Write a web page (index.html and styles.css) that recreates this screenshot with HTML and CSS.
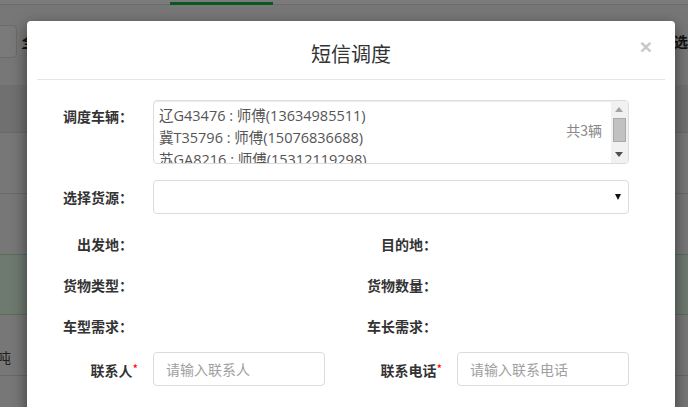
FILE: index.html
```html
<!DOCTYPE html>
<html lang="zh-CN">
<head>
<meta charset="utf-8">
<title>短信调度</title>
<link rel="stylesheet" href="styles.css">
</head>
<body>
<div class="page">
  <div class="topbar"><div class="tab-active"></div></div>
  <div class="toolbar">
    <div class="search-box"></div>
    <span class="tool-text">全部</span>
    <span class="tool-right">筛选</span>
  </div>
  <div class="grid-head"></div>
  <div class="grid-row"></div>
  <div class="grid-row"></div>
  <div class="grid-row selected"></div>
  <div class="grid-row"><span class="cell-unit">吨</span></div>
  <div class="grid-row"></div>
</div>
<div class="backdrop"></div>

<div class="modal">
  <div class="modal-header">
    <h4 class="modal-title">短信调度</h4>
    <span class="close">×</span>
  </div>
  <div class="modal-body">
    <div class="form-row row-vehicles">
      <label class="label label-top">调度车辆：</label>
      <div class="control">
        <div class="vehicle-box">
          <div class="vehicle-list">
            <div>辽G43476 : 师傅(13634985511)</div>
            <div>冀T35796 : 师傅(15076836688)</div>
            <div>苏GA8216 : 师傅(15312119298)</div>
          </div>
          <span class="count">共3辆</span>
          <div class="scrollbar">
            <span class="sb-up"></span>
            <span class="sb-thumb"></span>
            <span class="sb-down"></span>
          </div>
        </div>
      </div>
    </div>

    <div class="form-row row-select">
      <label class="label">选择货源：</label>
      <div class="control">
        <div class="select"><span class="select-arrow"></span></div>
      </div>
    </div>

    <div class="form-row half row-info first">
      <div class="field"><label class="label">出发地：</label><div class="control"></div></div>
      <div class="field"><label class="label">目的地：</label><div class="control"></div></div>
    </div>
    <div class="form-row half row-info">
      <div class="field"><label class="label">货物类型：</label><div class="control"></div></div>
      <div class="field"><label class="label">货物数量：</label><div class="control"></div></div>
    </div>
    <div class="form-row half row-info">
      <div class="field"><label class="label">车型需求：</label><div class="control"></div></div>
      <div class="field"><label class="label">车长需求：</label><div class="control"></div></div>
    </div>
    <div class="form-row half row-contact">
      <div class="field">
        <label class="label">联系人<span class="req">*</span></label>
        <div class="control"><input class="input" type="text" placeholder="请输入联系人"></div>
      </div>
      <div class="field">
        <label class="label">联系电话<span class="req">*</span></label>
        <div class="control"><input class="input" type="text" placeholder="请输入联系电话"></div>
      </div>
    </div>
  </div>
</div>
</body>
</html>
```

FILE: styles.css
```css
* { box-sizing: border-box; }

html, body {
  margin: 0;
  padding: 0;
}

body {
  width: 688px;
  height: 407px;
  overflow: hidden;
  position: relative;
  font-family: "Noto Sans CJK SC", "Open Sans", sans-serif;
  font-size: 14px;
  color: #333;
  background: #f0f0f0;
}

/* ---------- background page ---------- */
.page {
  width: 688px;
  height: 407px;
  background: #f0f0f0;
}

.topbar {
  position: relative;
  height: 5px;
  background: #f6f6f6;
  border-bottom: 1px solid #d8d8d8;
}

.tab-active {
  position: absolute;
  left: 170px;
  bottom: -1px;
  width: 103px;
  height: 3px;
  background: #17b03d;
}

.toolbar {
  height: 80px;
  display: flex;
  align-items: flex-start;
  padding-top: 20px;
  background: #eeeeee;
}

.search-box {
  width: 37px;
  height: 33px;
  margin-left: -20px;
  background: #f4f4f4;
  border: 1px solid #d6d6d6;
  border-radius: 4px;
}

.tool-text {
  margin-left: 5px;
  line-height: 33px;
  font-size: 14px;
  font-weight: bold;
  color: #222;
  text-decoration: underline;
}

.tool-right {
  margin-left: auto;
  margin-right: 0;
  line-height: 33px;
  font-size: 14px;
  font-weight: bold;
  color: #222;
}

.grid-head {
  height: 48px;
  background: #e0e0e0;
  border-bottom: 1px solid #d2d2d2;
}

.grid-row {
  height: 61px;
  background: #eeeeee;
  border-bottom: 1px solid #d2d2d2;
  padding-top: 32px;
}

.grid-row.selected {
  background: #dcf2de;
  border-top: 1px solid #aedcb5;
  border-bottom: 1px solid #aedcb5;
  margin-top: -1px;
}

.cell-unit {
  display: block;
  margin-left: -3px;
  font-size: 14px;
  line-height: 20px;
  color: #444;
}

.backdrop {
  position: absolute;
  inset: 0;
  background: rgba(0, 0, 0, 0.5);
}

/* ---------- modal ---------- */
.modal {
  position: absolute;
  left: 27px;
  top: 21px;
  width: 648px;
  height: 420px;
  background: #fff;
  border-radius: 4px;
  box-shadow: 0 5px 15px rgba(0, 0, 0, 0.5);
}

.modal-header {
  position: relative;
  margin: 0 10px;
  height: 59px;
  padding-top: 19px;
  border-bottom: 1px solid #e5e5e5;
}

.modal-title {
  margin: 0;
  text-align: center;
  font-size: 20px;
  line-height: 28px;
  font-weight: normal;
  color: #333;
}

.close {
  position: absolute;
  right: 13px;
  top: 15px;
  font-family: "Liberation Sans", sans-serif;
  font-size: 21px;
  font-weight: bold;
  line-height: 21px;
  color: #c8c8c8;
}

.modal-body {
  padding: 20px 30px 0 10px;
}

.form-row {
  display: flex;
}

.form-row.half {
  display: grid;
  grid-template-columns: 1fr 1fr;
}

.field {
  display: flex;
}

.label {
  flex: none;
  width: 96px;
  margin-right: 20px;
  text-align: right;
  font-weight: bold;
  font-size: 14px;
  color: #333;
}

.control {
  flex: 1;
  padding-right: 16px;
}

/* row 1: vehicles */
.row-vehicles { height: 64px; }

.label-top {
  padding-top: 6px;
  line-height: 20px;
}

.vehicle-box {
  position: relative;
  height: 64px;
  border: 1px solid #dcdcdc;
  border-radius: 4px;
  overflow: hidden;
  box-shadow: inset 0 1px 1px rgba(0, 0, 0, 0.075);
}

.vehicle-list {
  padding: 4px 5px;
  font-family: "Open Sans", "Noto Sans CJK SC", sans-serif;
  font-size: 14.5px;
  line-height: 22px;
  color: #555;
  white-space: nowrap;
}

.count {
  position: absolute;
  right: 26px;
  top: 18px;
  line-height: 22px;
  font-size: 14px;
  color: #888;
}

.scrollbar {
  position: absolute;
  top: 0;
  right: 0;
  bottom: 0;
  width: 17px;
  background: #f1f1f1;
}

.sb-up {
  position: absolute;
  left: 4px;
  top: 6px;
  width: 0;
  height: 0;
  border-left: 4px solid transparent;
  border-right: 4px solid transparent;
  border-bottom: 5px solid #a3a3a3;
}

.sb-thumb {
  position: absolute;
  left: 2px;
  top: 17px;
  width: 13px;
  height: 24px;
  background: #c1c1c1;
  border: 1px solid #a9a9a9;
}

.sb-down {
  position: absolute;
  left: 4px;
  top: 51px;
  width: 0;
  height: 0;
  border-left: 4px solid transparent;
  border-right: 4px solid transparent;
  border-top: 5px solid #505050;
}

/* row 2: select */
.row-select {
  margin-top: 16px;
  height: 34px;
}

.row-select .label { line-height: 34px; }

.select {
  position: relative;
  height: 34px;
  border: 1px solid #dcdcdc;
  border-radius: 4px;
  background: #fff;
}

.select-arrow {
  position: absolute;
  right: 7px;
  top: 13px;
  width: 0;
  height: 0;
  border-left: 3.5px solid transparent;
  border-right: 3.5px solid transparent;
  border-top: 6px solid #111;
}

/* info rows */
.row-info {
  height: 41px;
}

.row-info.first { margin-top: 10px; }

.row-info .label { line-height: 41px; }

/* contact row */
.row-contact {
  margin-top: 5px;
  height: 34px;
}

.row-contact .label { line-height: 34px; }

.req {
  color: #f00;
  font-size: 12px;
  font-weight: normal;
  vertical-align: 2px;
  margin-right: -5px;
}

.input {
  display: block;
  width: 100%;
  height: 34px;
  margin: 0;
  padding: 0 12px;
  border: 1px solid #dcdcdc;
  border-radius: 4px;
  font-family: "Noto Sans CJK SC", sans-serif;
  font-size: 14px;
  color: #555;
  background: #fff;
  outline: none;
}

.input::placeholder {
  color: #a0a0a0;
}
```
